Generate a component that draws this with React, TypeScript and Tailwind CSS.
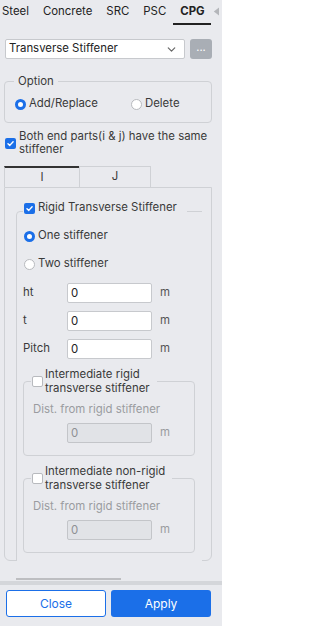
import { ChevronDown } from "lucide-react";

const Check = ({ checked }: { checked: boolean }) =>
  checked ? (
    <span className="flex h-[11px] w-[11px] shrink-0 items-center justify-center rounded-[2px] bg-[#1b6fe8]">
      <svg viewBox="0 0 10 10" className="h-[9px] w-[9px]" aria-hidden="true">
        <path
          d="M2.2 5.2 4.2 7.1 7.9 3"
          fill="none"
          stroke="#fff"
          strokeWidth="1.6"
          strokeLinecap="round"
          strokeLinejoin="round"
        />
      </svg>
    </span>
  ) : (
    <span className="h-[11px] w-[11px] shrink-0 rounded-[2px] border border-[#b8babe] bg-white" />
  );

const Radio = ({ checked }: { checked: boolean }) => (
  <span
    className={
      checked
        ? "h-[11px] w-[11px] shrink-0 rounded-full border-[3px] border-[#1b6fe8] bg-white"
        : "h-[11px] w-[11px] shrink-0 rounded-full border border-[#b8babe] bg-white"
    }
  />
);

const Field = ({ label }: { label: string }) => (
  <div className="flex h-[20px] items-center">
    <span className="w-[44px]">{label}</span>
    <div className="h-[20px] w-[85px] rounded-[2px] border border-[#c7c9cd] bg-white px-[3px] leading-[18px] text-[#222]">
      0
    </div>
    <span className="ml-[8px] text-[#555]">m</span>
  </div>
);

/** Greyed-out sub group: checkbox legend + disabled distance input */
const SubGroup = ({ first, second }: { first: string; second: string }) => (
  <fieldset className="w-[172px] rounded-[4px] border border-[#cfd1d5] pl-[7px] pb-[12px]">
    <legend className="pl-[1px] pr-[7px]">
      <div className="flex items-center gap-[2px]">
        <Check checked={false} />
        <span className="leading-[14px]">
          {first}
          <br />
          {second}
        </span>
      </div>
    </legend>
    <div className="mt-[7px] pl-[2px] leading-[14px] text-[#9a9ca0]">Dist. from rigid stiffener</div>
    <div className="mt-[7px] flex h-[20px] items-center pl-[2px]">
      <div className="ml-[34px] h-[20px] w-[85px] rounded-[2px] border border-[#c3c5c9] bg-[#e1e3e7] px-[3px] leading-[18px] text-[#8e9094]">
        0
      </div>
      <span className="ml-[8px] text-[#9a9ca0]">m</span>
    </div>
  </fieldset>
);

export default function App() {
  return (
    <div className="flex h-[626px] w-[222px] flex-col overflow-hidden bg-[#e9eaee] font-['Inter',sans-serif] text-[11.4px] text-[#3a3a3a]">
      {/* Section tabs */}
      <div className="flex h-[25px] shrink-0 items-start">
        <div className="flex w-[211px] overflow-hidden">
          <div className="-ml-[5px] flex text-[#222]">
            {["Steel", "Concrete", "SRC", "PSC"].map((t) => (
              <span key={t} className="flex h-[25px] items-center px-[7px] pb-[2px]">
                {t}
              </span>
            ))}
            <span className="flex h-[25px] items-center border-b-2 border-[#222] px-[7px] font-bold">CPG</span>
          </div>
        </div>
        <svg viewBox="0 0 7 9" className="ml-[2px] mt-[7px] h-[9px] w-[7px]" aria-hidden="true">
          <path d="M6 0.5 0.8 4.5 6 8.5Z" fill="#b4b6ba" />
        </svg>
      </div>

      {/* Type select */}
      <div className="mt-[14px] flex h-[20px] shrink-0 items-center pl-[5px]">
        <div className="flex h-[20px] w-[180px] items-center justify-between rounded-[2px] border border-[#c7c9cd] bg-white pl-[3px] pr-[6px] text-[#222]">
          <span>Transverse Stiffener</span>
          <ChevronDown className="h-[13px] w-[13px] text-[#666]" strokeWidth={2.2} aria-hidden="true" />
        </div>
        <div className="ml-[5px] flex h-[20px] w-[22px] items-center justify-center rounded-[3px] bg-[#a9aeb5] pb-[3px] text-[11px] text-white">
          ...
        </div>
      </div>

      {/* Option */}
      <fieldset className="ml-[4px] mt-[15px] w-[208px] shrink-0 rounded-[4px] border border-[#cfd1d5] pl-[9px] pb-[10px]">
        <legend className="px-[4px] leading-[14px]">Option</legend>
        <div className="mt-[8px] flex h-[16px] items-center">
          <label className="flex w-[117px] items-center gap-[3px] pl-[1px]">
            <Radio checked />
            <span>Add/Replace</span>
          </label>
          <label className="flex items-center gap-[3px]">
            <Radio checked={false} />
            <span>Delete</span>
          </label>
        </div>
      </fieldset>

      <label className="mt-[7px] flex shrink-0 items-center gap-[3px] pl-[5px]">
        <Check checked />
        <span className="leading-[13px]">
          Both end parts(i &amp; j) have the same
          <br />
          stiffener
        </span>
      </label>

      {/* I / J tabs */}
      <div className="ml-[4px] mt-[10px] flex h-[21px] shrink-0">
        <div className="flex w-[75px] items-center justify-center border-l border-t-2 border-l-[#cfd1d5] border-t-[#333]">
          I
        </div>
        <div className="flex w-[72px] items-center justify-center border-x border-t border-[#cfd1d5]">J</div>
      </div>

      <div className="ml-[4px] h-[374px] w-[208px] shrink-0 rounded-b-[6px] border border-[#cfd1d5] pl-[11px]">
        <div className="relative z-10 -mb-px h-[373px] w-[186px] overflow-hidden bg-[#e9eaee] pt-[13px]">
          <fieldset className="w-[330px] rounded-[4px] border border-[#cfd1d5] pl-[6px] pb-[30px]">
            <legend className="pb-[7px] pl-[1px] pr-[10px]">
              <div className="flex h-[14px] items-center gap-[3px]">
                <Check checked />
                <span>Rigid Transverse Stiffener</span>
              </div>
            </legend>
            <label className="flex h-[28px] items-center gap-[3px] pl-[1px]">
              <Radio checked />
              <span>One stiffener</span>
            </label>
            <label className="flex h-[28px] items-center gap-[3px] pl-[1px]">
              <Radio checked={false} />
              <span>Two stiffener</span>
            </label>
            <div className="mt-[5px] flex flex-col gap-[8px]">
              <Field label="ht" />
              <Field label="t" />
              <Field label="Pitch" />
            </div>
            <div className="mt-[8px]">
              <SubGroup first="Intermediate rigid" second="transverse stiffener" />
            </div>
            <div className="mt-[8px]">
              <SubGroup first="Intermediate non-rigid" second="transverse stiffener" />
            </div>
          </fieldset>
        </div>
      </div>

      {/* horizontal scroll thumb */}
      <div className="ml-[16px] mt-[17px] h-[2px] w-[105px] shrink-0 bg-[#bdbec1]" />
      <div className="mt-[1px] h-[4px] shrink-0 bg-[#d4d6da]" />

      {/* Footer */}
      <div className="flex shrink-0 gap-[5px] px-[6px] pt-[5px]">
        <button className="h-[27px] w-[100px] rounded-[3px] border border-[#1b6fe8] bg-white text-[12px] text-[#1b6fe8]">
          Close
        </button>
        <button className="h-[27px] w-[100px] rounded-[3px] bg-[#1b6fe8] text-[12px] text-white">Apply</button>
      </div>
    </div>
  );
}
